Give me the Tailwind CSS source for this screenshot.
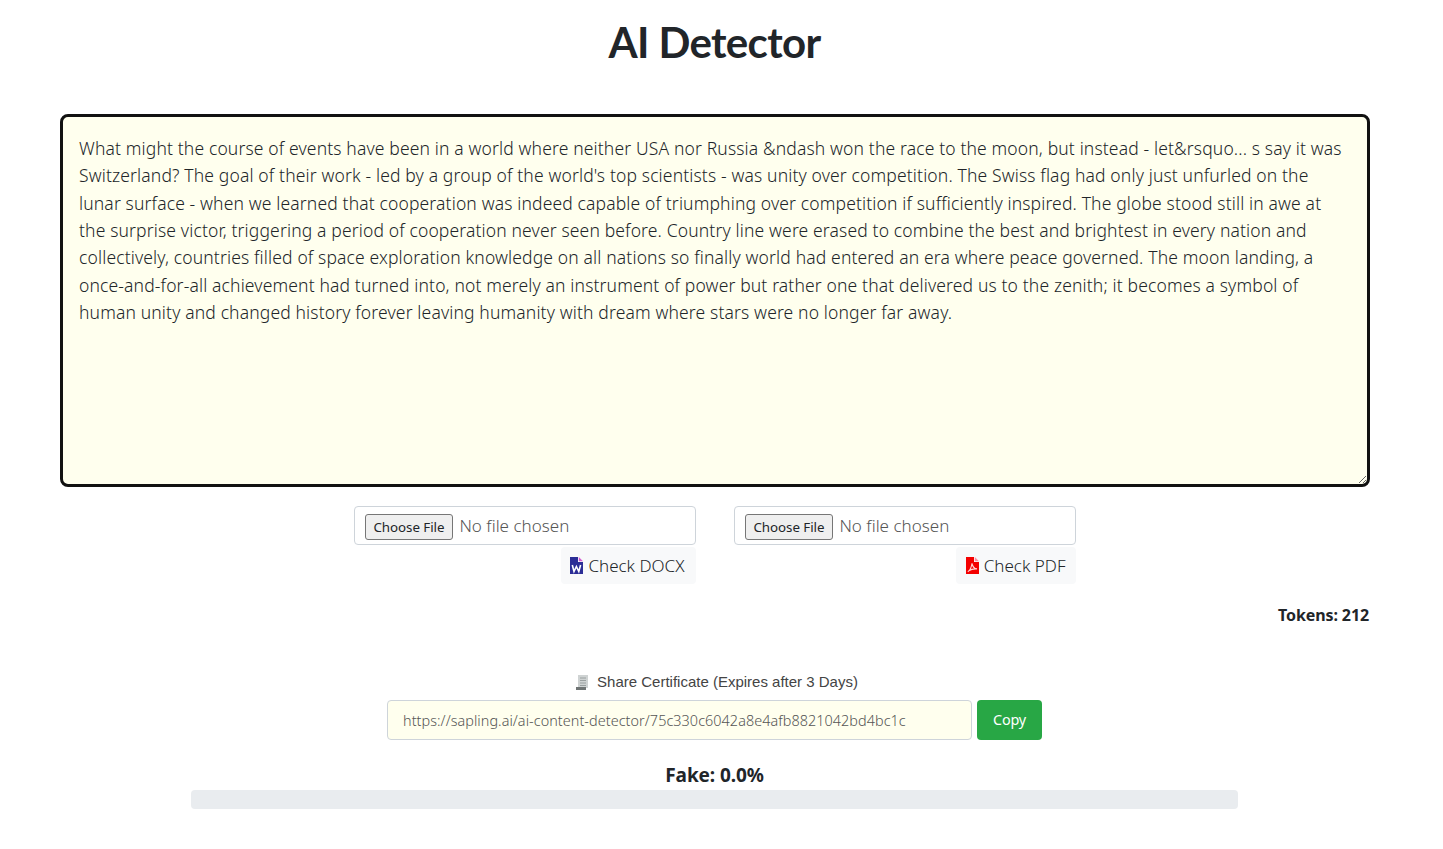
<!DOCTYPE html>
<html lang="en">
<head>
<meta charset="utf-8">
<title>AI Detector</title>
<script src="https://cdn.jsdelivr.net/npm/@tailwindcss/browser@4"></script>
</head>
<body class="bg-white text-[#212529] font-['Noto_Sans',sans-serif] overflow-hidden">
<main class="w-[1309px] h-[849px] ml-[60px] flex flex-col">
  <h1 class="h-[114px] pt-[12px] text-center font-['Lato',sans-serif] font-bold text-[42px] leading-[60px] tracking-[-0.65px]">AI Detector</h1>
  <textarea wrap="off" class="w-[1310px] max-w-none h-[373px] block shrink-0 bg-[#ffffee] border-[3px] border-[#111] rounded-lg pt-[18px] px-4 text-[17.5px] font-light leading-[27.33px] tracking-[0.143px] overflow-hidden text-[#212529] outline-none resize-y">What might the course of events have been in a world where neither USA nor Russia &amp;ndash won the race to the moon, but instead - let&amp;rsquo... s say it was
Switzerland? The goal of their work - led by a group of the world's top scientists - was unity over competition. The Swiss flag had only just unfurled on the
lunar surface - when we learned that cooperation was indeed capable of triumphing over competition if sufficiently inspired. The globe stood still in awe at
the surprise victor, triggering a period of cooperation never seen before. Country line were erased to combine the best and brightest in every nation and
collectively, countries filled of space exploration knowledge on all nations so finally world had entered an era where peace governed. The moon landing, a
once-and-for-all achievement had turned into, not merely an instrument of power but rather one that delivered us to the zenith; it becomes a symbol of
human unity and changed history forever leaving humanity with dream where stars were no longer far away.</textarea>

  <div class="flex justify-center gap-[38px] mt-[19px]">
    <div class="w-[342px] flex flex-col items-end gap-[2px]">
      <input type="file" class="w-full h-[39px] block border border-[#ced4da] rounded bg-white pl-[10px] pt-[7px] pb-0 text-[17px] font-light leading-[24px] tracking-[0.03px] text-[#555] file:h-[26px] file:mr-[6px] file:px-2 file:py-0 file:bg-[#efefef] file:border file:border-solid file:border-[#767676] file:rounded-[3px] file:text-[13.33px] file:font-normal file:leading-[24px] file:tracking-[-0.05px] file:text-[#212529]">
      <button class="h-[37px] pl-[9px] pr-[11px] flex items-center gap-[5px] rounded bg-[#f8f9fa] text-[17px] font-light tracking-[0px] text-[#212529] whitespace-nowrap">
        <svg class="w-[13px] h-[17px]" viewBox="0 0 13 17"><path fill="#2b2d96" d="M0 0h8v5h5v12H0z"/><path fill="#d35bd0" d="M8.800 0 13 4.200H8.800z"/><path fill="none" stroke="#fff" stroke-width="1.600" d="M2.300 8 4 14.500l2.400-5 2.400 5 1.800-6.500"/></svg>
        Check DOCX
      </button>
    </div>
    <div class="w-[342px] flex flex-col items-end gap-[2px]">
      <input type="file" class="w-full h-[39px] block border border-[#ced4da] rounded bg-white pl-[10px] pt-[7px] pb-0 text-[17px] font-light leading-[24px] tracking-[0.03px] text-[#555] file:h-[26px] file:mr-[6px] file:px-2 file:py-0 file:bg-[#efefef] file:border file:border-solid file:border-[#767676] file:rounded-[3px] file:text-[13.33px] file:font-normal file:leading-[24px] file:tracking-[-0.05px] file:text-[#212529]">
      <button class="h-[37px] px-[10px] flex items-center gap-[5px] rounded bg-[#f8f9fa] text-[17px] font-light tracking-[0px] text-[#212529] whitespace-nowrap">
        <svg class="w-[13px] h-[17px]" viewBox="0 0 13 17"><path fill="#f40000" d="M0 0h8v5h5v12H0z"/><path fill="#ff8fa0" d="M8.800 0 13 4.200H8.800z"/><path fill="none" stroke="#ffd5d5" stroke-width="1.100" d="M1.800 14.800C4 13.500 5.500 10 6 6.300c.5 3 2 5.200 5 5.600-3-.2-6.300.5-8.200 1.800"/></svg>
        Check PDF
      </button>
    </div>
  </div>

  <div class="mt-[19px] text-right font-bold text-[16px] leading-6 tracking-[-0.1px]">Tokens: 212</div>

  <div class="mt-[43px] flex justify-center items-center gap-[8px] pl-[4px] h-[24px] font-['Liberation_Sans',sans-serif] text-[15px] text-[#444]">
    <svg class="w-[14px] h-[15px]" viewBox="0 0 14 15"><path fill="#cfd3d3" d="M3 0h10v13H3z"/><path stroke="#9aa0a0" d="M5 3h6M5 5.500h6M5 8h6M5 10.500h6"/><path fill="#6f7474" d="M1 12h10v3H1z"/></svg>
    <span>Share Certificate (Expires after 3 Days)</span>
  </div>

  <div class="mt-[6px] flex justify-center items-stretch gap-[5px] h-[40px]">
    <input readonly value="https://sapling.ai/ai-content-detector/75c330c6042a8e4afb8821042bd4bc1c" class="w-[585px] border border-[#ced4da] rounded bg-[#ffffee] px-[15px] pt-[1px] text-[14.4px] font-light tracking-[0.057px] text-[#555] outline-none">
    <button class="w-[65px] rounded bg-[#28a745] text-white text-[14.4px] tracking-[-0.15px]">Copy</button>
  </div>

  <div class="mt-[22px] text-center font-bold text-[19px] leading-[26px] tracking-[-0.1px]">Fake: 0.0%</div>
  <div class="mt-[2px] mx-auto w-[1047px] h-[19px] rounded bg-[#e9ecef]"></div>
</main>
</body>
</html>
